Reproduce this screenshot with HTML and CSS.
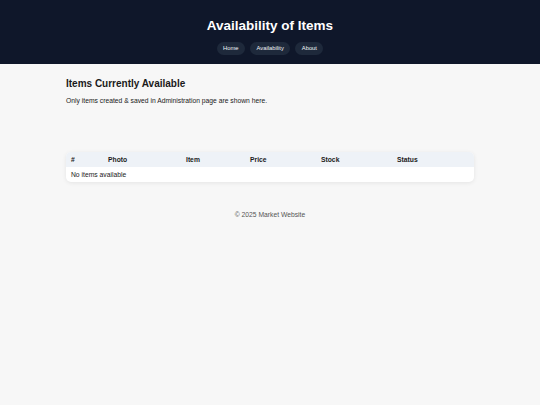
FILE: index.html
```html
<!DOCTYPE html>
<html lang="en">
<head>
<meta charset="utf-8">
<title>Availability of Items</title>
<link rel="stylesheet" href="styles.css">
</head>
<body>
<header class="site-header">
  <h1 class="site-title">Availability of Items</h1>
  <nav class="nav">
    <a class="nav-link" href="#">Home</a>
    <a class="nav-link" href="#">Availability</a>
    <a class="nav-link" href="#">About</a>
  </nav>
</header>
<main class="content">
  <h2 class="section-title">Items Currently Available</h2>
  <p class="section-note">Only items created &amp; saved in Administration page are shown here.</p>
  <div class="table-card">
    <table class="items">
      <colgroup>
        <col class="c1"><col class="c2"><col class="c3"><col class="c4"><col class="c5"><col class="c6">
      </colgroup>
      <thead>
        <tr><th>#</th><th>Photo</th><th>Item</th><th>Price</th><th>Stock</th><th>Status</th></tr>
      </thead>
      <tbody>
        <tr><td colspan="6">No items available</td></tr>
      </tbody>
    </table>
  </div>
</main>
<footer class="site-footer">© 2025 Market Website</footer>
</body>
</html>
```
FILE: styles.css
```css
html, body {
  margin: 0;
  padding: 0;
}
body {
  background: #f7f7f7;
  font-family: "Liberation Sans", Arial, sans-serif;
  font-size: 6.75px;
  color: #1a1a1a;
}
.site-header {
  background: #0f172a;
  color: #fff;
  padding: 17px 0 9px;
  text-align: center;
}
.site-title {
  margin: 0;
  font-size: 13.5px;
  line-height: 17px;
  font-weight: 700;
}
.nav {
  display: flex;
  justify-content: center;
  gap: 5px;
  margin-top: 8px;
}
.nav-link {
  display: block;
  background: #1e293b;
  color: #f1f5f9;
  text-decoration: none;
  font-size: 5.8px;
  line-height: 13px;
  height: 13px;
  padding: 0 6.5px;
  border-radius: 7px;
}
.content {
  width: 408px;
  margin: 0 auto;
  padding-top: 13px;
}
.section-title {
  margin: 0;
  font-size: 10px;
  line-height: 13px;
  font-weight: 700;
  color: #1a1a1a;
}
.section-note {
  margin: 7px 0 0;
  line-height: 8px;
}
.table-card {
  margin-top: 47px;
  background: #fff;
  border-radius: 5px;
  box-shadow: 0 1px 4px rgba(0, 0, 0, 0.08);
  overflow: hidden;
}
.items {
  width: 100%;
  border-collapse: collapse;
  table-layout: fixed;
}
.c1 { width: 37px; }
.c2 { width: 78px; }
.c3 { width: 64px; }
.c4 { width: 71px; }
.c5 { width: 76px; }
.c6 { width: 82px; }
.items th {
  background: #eef2f7;
  text-align: left;
  font-weight: 700;
  height: 15px;
  padding: 0 5px;
}
.items td {
  height: 15px;
  padding: 0 5px;
}
.site-footer {
  text-align: center;
  color: #555;
  margin-top: 29px;
  line-height: 8px;
}
```
